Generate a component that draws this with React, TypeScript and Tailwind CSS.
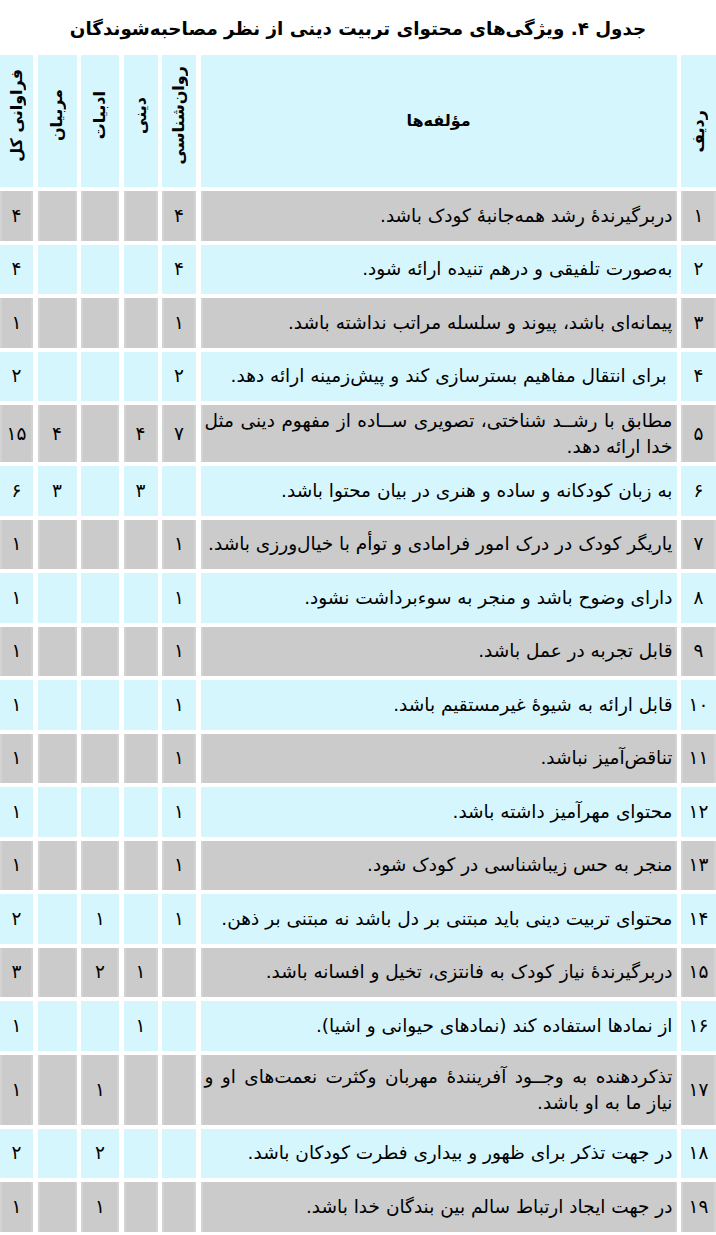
import React from "react";

type Row = {
  n: string;
  text: string[];
  psy?: string;
  dini?: string;
  adab?: string;
  morabi?: string;
  total: string;
};

const Z = "\u200c";

const rows: Row[] = [
  { n: "۱", text: [`دربرگیرندهٔ رشد همه${Z}جانبهٔ کودک باشد.`], psy: "۴", total: "۴" },
  { n: "۲", text: [`به${Z}صورت تلفیقی و درهم تنیده ارائه شود.`], psy: "۴", total: "۴" },
  { n: "۳", text: [`پیمانه${Z}ای باشد، پیوند و سلسله مراتب نداشته باشد.`], psy: "۱", total: "۱" },
  { n: "۴", text: [` برای انتقال مفاهیم بسترسازی کند و پیش${Z}زمینه ارائه دهد.`], psy: "۲", total: "۲" },
  {
    n: "۵",
    text: ["مطابق با رشــد شناختی، تصویری ســاده از مفهوم دینی مثل", "خدا ارائه دهد."],
    psy: "۷",
    dini: "۴",
    morabi: "۴",
    total: "۱۵",
  },
  { n: "۶", text: ["به زبان کودکانه و ساده و هنری در بیان محتوا باشد."], dini: "۳", morabi: "۳", total: "۶" },
  { n: "۷", text: [`یاریگر کودک در درک امور فرامادی و توأم با خیال${Z}ورزی باشد.`], psy: "۱", total: "۱" },
  { n: "۸", text: ["دارای وضوح باشد و منجر به سوءبرداشت نشود."], psy: "۱", total: "۱" },
  { n: "۹", text: ["قابل تجربه در عمل باشد."], psy: "۱", total: "۱" },
  { n: "۱۰", text: ["قابل ارائه به شیوهٔ غیرمستقیم باشد."], psy: "۱", total: "۱" },
  { n: "۱۱", text: [`تناقض${Z}آمیز نباشد.`], psy: "۱", total: "۱" },
  { n: "۱۲", text: ["محتوای مهرآمیز داشته باشد."], psy: "۱", total: "۱" },
  { n: "۱۳", text: ["منجر به حس زیباشناسی در کودک شود."], psy: "۱", total: "۱" },
  { n: "۱۴", text: ["محتوای تربیت دینی باید مبتنی بر دل باشد نه مبتنی بر ذهن."], psy: "۱", adab: "۱", total: "۲" },
  { n: "۱۵", text: ["دربرگیرندهٔ نیاز کودک به فانتزی، تخیل و افسانه باشد."], dini: "۱", adab: "۲", total: "۳" },
  { n: "۱۶", text: ["از نمادها استفاده کند (نمادهای حیوانی و اشیا)."], dini: "۱", total: "۱" },
  {
    n: "۱۷",
    text: [`تذکردهنده به وجــود آفرینندهٔ مهربان وکثرت نعمت${Z}های او و`, "نیاز ما به او باشد."],
    adab: "۱",
    total: "۱",
  },
  { n: "۱۸", text: ["در جهت تذکر برای ظهور و بیداری فطرت کودکان باشد."], adab: "۲", total: "۲" },
  { n: "۱۹", text: ["در جهت ایجاد ارتباط سالم بین بندگان خدا باشد."], adab: "۱", total: "۱" },
];

const headCell = "bg-[#d6f6fd] h-[132px] flex items-center justify-center font-bold text-[16px]";

function VHead({ label }: { label: string }) {
  return (
    <div className={`${headCell} pb-3`}>
      <span className="[writing-mode:vertical-rl] rotate-180 whitespace-nowrap">{label}</span>
    </div>
  );
}

export default function App() {
  return (
    <div
      dir="rtl"
      className="w-[716px] bg-white text-black text-[18.5px]"
      style={{ fontFamily: '"DejaVu Sans", sans-serif' }}
    >
      {/* عنوان جدول */}
      <div className="h-[55px] flex items-center justify-center pt-0.5">
        <h1 className="font-bold text-[18.3px]">{`جدول ۴. ویژگی${Z}های محتوای تربیت دینی از نظر مصاحبه${Z}شوندگان`}</h1>
      </div>

      <div className="grid grid-cols-[35px_minmax(0,1fr)_34px_34px_38px_39px_33px] gap-x-[4.5px] gap-y-1">
        {/* سرستون‌ها */}
        <div className={`${headCell} pt-5`}>
          <span className="[writing-mode:vertical-rl] rotate-180 whitespace-nowrap">ردیف</span>
        </div>
        <div className={headCell}>{`مؤلفه${Z}ها`}</div>
        <VHead label={`روان${Z}شناسی`} />
        <VHead label="دینی" />
        <VHead label="ادبیات" />
        <VHead label="مربیان" />
        <VHead label="فراوانی کل" />

        {rows.map((r, i) => {
          const bg =
            i % 2 === 0
              ? "bg-[#cbcbcb] shadow-[inset_2px_0_0_#d3d3d3,inset_-2px_0_0_#d3d3d3]"
              : "bg-[#d6f6fd]";
          const h = r.n === "۵" ? "h-[57px]" : r.n === "۱۷" ? "h-[70px]" : "h-[49.5px]";
          const num = `${bg} ${h} flex items-center justify-center`;
          return (
            <React.Fragment key={r.n}>
              <div className={num}>{r.n}</div>
              <div className={`${bg} ${h} flex flex-col justify-center px-1 leading-[26px] overflow-hidden`}>
                {r.text.length > 1 ? (
                  <>
                    <span className="block whitespace-nowrap text-justify [text-align-last:justify]">{r.text[0]}</span>
                    <span className="block">{r.text[1]}</span>
                  </>
                ) : (
                  <span className="whitespace-pre">{r.text[0]}</span>
                )}
              </div>
              <div className={num}>{r.psy ?? ""}</div>
              <div className={num}>{r.dini ?? ""}</div>
              <div className={num}>{r.adab ?? ""}</div>
              <div className={num}>{r.morabi ?? ""}</div>
              <div className={num}>{r.total}</div>
            </React.Fragment>
          );
        })}
      </div>
    </div>
  );
}
